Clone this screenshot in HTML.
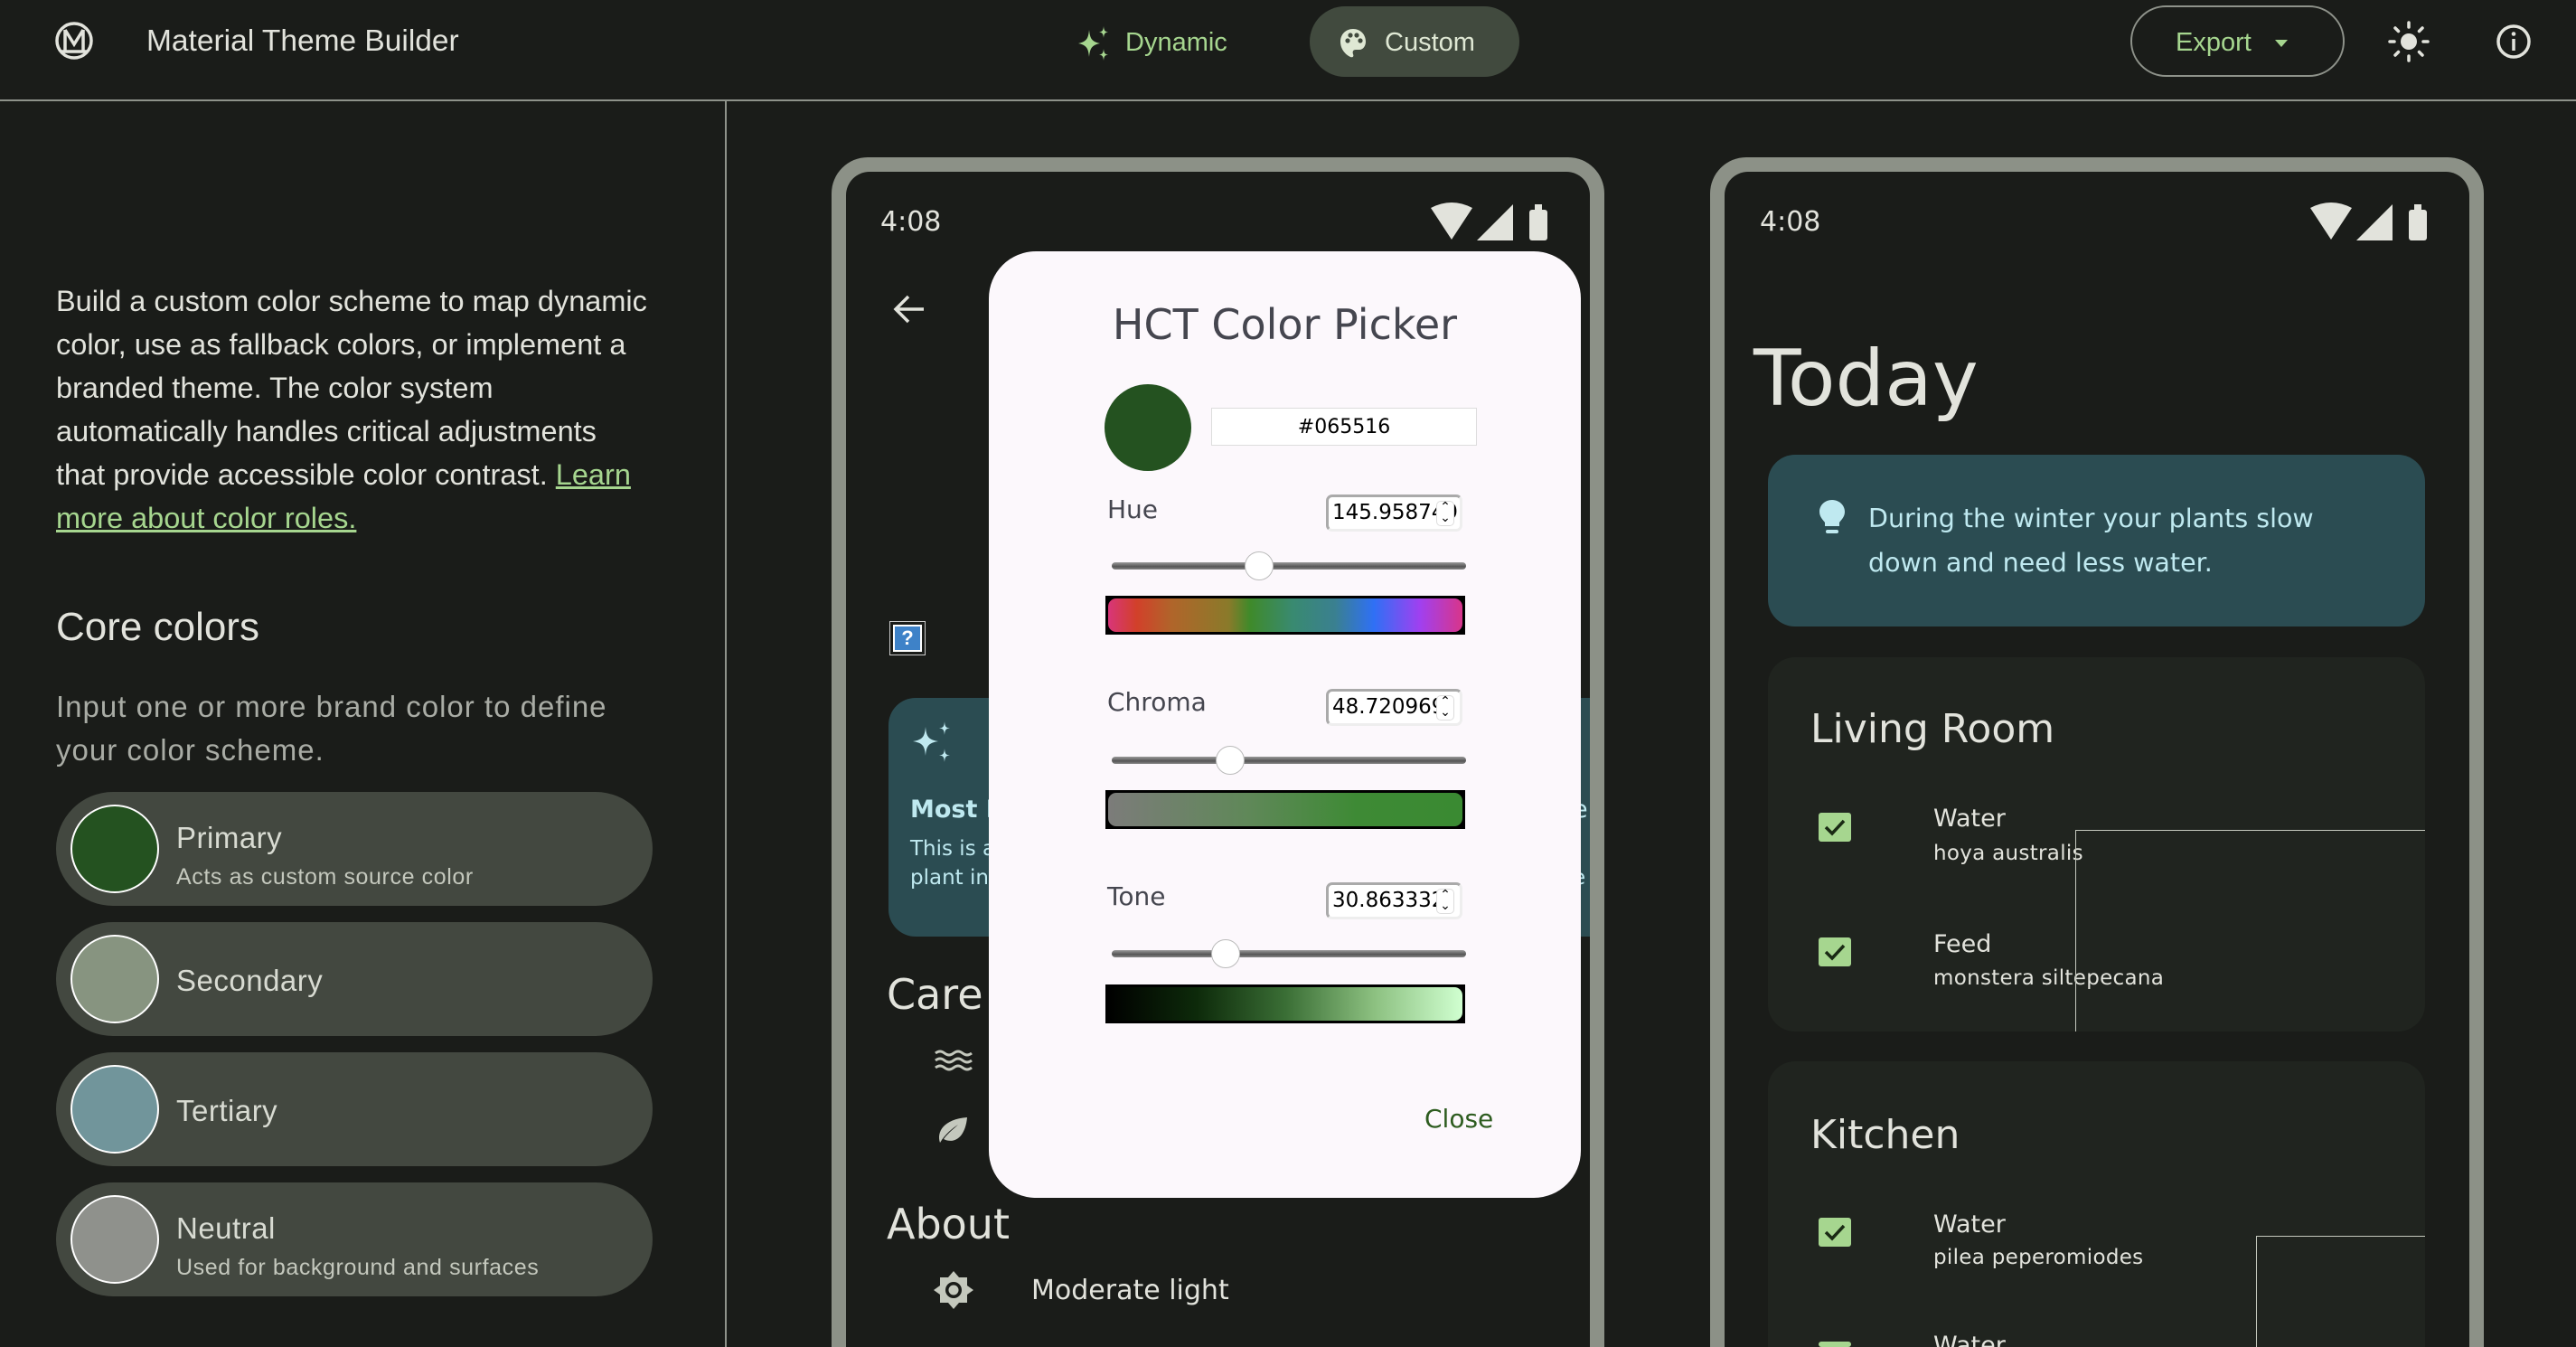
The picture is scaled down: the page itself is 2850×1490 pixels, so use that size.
<!DOCTYPE html>
<html><head><meta charset="utf-8"><style>
*{margin:0;padding:0;box-sizing:border-box}
html,body{width:2850px;height:1490px;overflow:hidden}
body{background:#1a1c19;font-family:"Liberation Sans",sans-serif;color:#e2e3dc;position:relative}
#w{position:absolute;left:0;top:0;width:2850px;height:1490px;overflow:hidden}
.a{position:absolute;white-space:nowrap}
.card{position:absolute;left:62px;width:660px;height:126px;border-radius:63px;background:#434840}
.card .c{position:absolute;left:16px;top:14px;width:98px;height:98px;border-radius:50%;border:2px solid #fff}
.card .t{position:absolute;left:133px;font-size:33px;color:#d8dbd2;letter-spacing:.5px}
.card .s{position:absolute;left:133px;font-size:25px;color:#c4c8bd;letter-spacing:.6px}
.track{position:absolute;left:1230px;width:392px;height:8px;border-radius:4px;background:linear-gradient(#9a9a9a,#555 60%,#888)}
.thumb{position:absolute;width:32px;height:32px;border-radius:50%;background:#fff;border:1px solid #bbb}
.bar{position:absolute;left:1223px;width:398px;height:43px;border:3px solid #000;background:#000}
.bar div{width:100%;height:100%;border-radius:9px}
.inp{position:absolute;left:1467px;width:151px;height:41px;border:3px solid #aaa;border-right-color:#eee;border-bottom-color:#eee;border-radius:7px;background:#fff;font-size:23px;color:#000;line-height:35px;padding-left:4px;overflow:hidden}
.inp span{position:absolute;right:6px;top:4px;width:20px;height:28px;font-size:14px;line-height:12px;text-align:center;background:#fff;border:1px solid #ddd;border-radius:5px}
.lbl{position:absolute;left:1225px;font-size:28px;color:#45464f}
.chk{position:absolute;left:104px;width:36px;height:32px;background:#a6d68f;border-radius:3px}
.chk svg{position:absolute;left:6px;top:5px}
.ph{font-family:"DejaVu Sans","Liberation Sans",sans-serif}
</style></head><body><div id="w">
<!-- header -->
<svg class="a" style="left:60px;top:23px" width="44" height="44" viewBox="0 0 44 44"><circle cx="22" cy="22" r="19" fill="none" stroke="#e2e3dc" stroke-width="3.5"/><path d="M12 10v24M32 10v24M12 10l10 16 10-16M8 34h28" fill="none" stroke="#e2e3dc" stroke-width="3.5"/></svg>
<div class="a" style="left:162px;top:26px;font-size:33.5px;line-height:40px;color:#e2e3dc">Material Theme Builder</div>
<svg class="a" style="left:1193px;top:29px" width="36" height="38" viewBox="0 0 36 38"><path d="M12 4C13 14 15 17 24 19 15 21 13 24 12 34 11 24 9 21 0 19 9 17 11 14 12 4Z" fill="#a6d68f"/><path d="M28 0C28.5 5 29.5 6 33 6.5 29.5 7 28.5 8 28 13 27.5 8 26.5 7 23 6.5 26.5 6 27.5 5 28 0Z" fill="#a6d68f"/><path d="M28 25C28.5 30 29.5 31 33 31.5 29.5 32 28.5 33 28 38 27.5 33 26.5 32 23 31.5 26.5 31 27.5 30 28 25Z" fill="#a6d68f"/></svg>
<div class="a" style="left:1245px;top:29px;font-size:29px;line-height:36px;color:#a6d68f">Dynamic</div>
<div class="a" style="left:1449px;top:7px;width:232px;height:78px;border-radius:39px;background:#414a3e"></div>
<svg class="a" style="left:1482px;top:31px" width="30" height="34" viewBox="0 0 30 34"><path d="M15 1C7 1 1 7 1 15c0 8 5 14 11 17 3 1 4-1 3-3-1-3 0-5 3-5h4c4 0 7-4 7-9C29 7 23 1 15 1Z" fill="#dfe8d4"/><circle cx="9" cy="14" r="2.6" fill="#414a3e"/><circle cx="12" cy="8" r="2.6" fill="#414a3e"/><circle cx="19" cy="8" r="2.6" fill="#414a3e"/><circle cx="23" cy="14" r="2.6" fill="#414a3e"/></svg>
<div class="a" style="left:1532px;top:29px;font-size:29px;line-height:36px;color:#dfe8d4">Custom</div>
<div class="a" style="left:2357px;top:6px;width:237px;height:79px;border-radius:40px;border:2px solid #8e928a"></div>
<div class="a" style="left:2407px;top:29px;font-size:29px;line-height:36px;color:#a6d68f">Export</div>
<div class="a" style="left:2517px;top:44px;width:0;height:0;border-left:7px solid transparent;border-right:7px solid transparent;border-top:8px solid #a6d68f"></div>
<svg class="a" style="left:2641px;top:22px" width="48" height="48" viewBox="0 0 48 48"><circle cx="24" cy="24" r="9" fill="#e2e3dc"/><g stroke="#e2e3dc" stroke-width="3.5" stroke-linecap="round"><path d="M24 3v5M24 40v5M3 24h5M40 24h5M9 9l3.5 3.5M35.5 35.5L39 39M9 39l3.5-3.5M35.5 12.5L39 9"/></g></svg>
<svg class="a" style="left:2761px;top:26px" width="40" height="40" viewBox="0 0 40 40"><circle cx="20" cy="20" r="17" fill="none" stroke="#e2e3dc" stroke-width="3.5"/><path d="M20 17v13" stroke="#e2e3dc" stroke-width="3.5"/><circle cx="20" cy="11.5" r="2.3" fill="#e2e3dc"/></svg>
<div class="a" style="left:0;top:110px;width:2850px;height:2px;background:#8e928a"></div>
<div class="a" style="left:802px;top:111px;width:2px;height:1379px;background:#8e928a"></div>

<!-- sidebar -->
<div class="a" style="left:62px;top:309px;font-size:32.5px;line-height:48px;color:#e2e3dc">Build a custom color scheme to map dynamic<br>color, use as fallback colors, or implement a<br>branded theme. The color system<br>automatically handles critical adjustments<br>that provide accessible color contrast. <span style="color:#a6d68f;text-decoration:underline">Learn</span><br><span style="color:#a6d68f;text-decoration:underline">more about color roles.</span></div>
<div class="a" style="left:62px;top:668px;font-size:44px;line-height:52px;color:#e2e3dc">Core colors</div>
<div class="a" style="left:62px;top:758px;font-size:33px;line-height:48px;color:#a9aca5;letter-spacing:1px">Input one or more brand color to define<br>your color scheme.</div>
<div class="card" style="top:876px"><div class="c" style="background:#245220"></div><div class="t" style="top:32px">Primary</div><div class="s" style="top:80px">Acts as custom source color</div></div>
<div class="card" style="top:1020px"><div class="c" style="background:#879480"></div><div class="t" style="top:46px">Secondary</div></div>
<div class="card" style="top:1164px"><div class="c" style="background:#71959b"></div><div class="t" style="top:46px">Tertiary</div></div>
<div class="card" style="top:1308px"><div class="c" style="background:#8f918c"></div><div class="t" style="top:32px">Neutral</div><div class="s" style="top:80px">Used for background and surfaces</div></div>

<!-- phone 1 -->
<div class="a" style="left:920px;top:174px;width:855px;height:1316px;border-radius:40px 40px 0 0;background:#8c9187"></div>
<div class="a ph" style="left:936px;top:190px;width:823px;height:1300px;border-radius:26px 26px 0 0;background:#1a1c19"></div>
<div class="a ph" style="left:974px;top:228px;font-size:30px;line-height:36px;color:#e2e3dc">4:08</div>
<svg class="a" style="left:1581px;top:224px" width="135" height="44" viewBox="0 0 135 44"><path d="M2 6Q25 -6 48 6L25 41Z" fill="#e2e3dc"/><path d="M53 42L93 2V42Z" fill="#e2e3dc"/><rect x="111" y="8" width="20" height="34" rx="3" fill="#e2e3dc"/><rect x="117" y="2" width="8" height="7" fill="#e2e3dc"/></svg>
<svg class="a" style="left:988px;top:325px" width="36" height="34" viewBox="0 0 36 34"><path d="M34 17H4M17 3L3 17l14 14" fill="none" stroke="#e2e3dc" stroke-width="3.5"/></svg>
<div class="a" style="left:984px;top:687px;width:40px;height:38px;border:1px solid #ccc;padding:3px"><div style="width:100%;height:100%;background:#3e82c8;border:2px solid #fff;color:#fff;font-size:22px;line-height:26px;text-align:center;font-weight:bold">?</div></div>
<div class="a" style="left:983px;top:772px;width:776px;height:264px;border-radius:30px 0 0 30px;background:#2b4c52"></div>
<svg class="a" style="left:1008px;top:798px" width="50" height="46" viewBox="0 0 50 46"><path d="M16 6C17 17 19 20 30 22 19 24 17 27 16 38 15 27 13 24 2 22 13 20 15 17 16 6Z" fill="#bfe9f0"/><path d="M37 0C37.5 6 38.5 7 43 7.5 38.5 8 37.5 9 37 15 36.5 9 35.5 8 31 7.5 35.5 7 36.5 6 37 0Z" fill="#bfe9f0"/><path d="M37 30C37.5 36 38.5 37 43 37.5 38.5 38 37.5 39 37 45 36.5 39 35.5 38 31 37.5 35.5 37 36.5 36 37 30Z" fill="#bfe9f0"/></svg>
<div class="a ph" style="left:1007px;top:880px;font-size:27px;font-weight:bold;color:#bfe9f0">Most Popular</div>
<div class="a ph" style="left:1007px;top:926px;font-size:23px;color:#bfe9f0">This is a</div>
<div class="a ph" style="left:1007px;top:958px;font-size:23px;color:#bfe9f0">plant in</div>
<div class="a ph" style="left:1740px;top:880px;font-size:27px;color:#bfe9f0">e</div>
<div class="a ph" style="left:1740px;top:958px;font-size:23px;color:#bfe9f0">e</div>
<div class="a ph" style="left:981px;top:1072px;font-size:46px;line-height:56px;color:#e2e3dc">Care</div>
<svg class="a" style="left:1034px;top:1160px" width="42" height="26" viewBox="0 0 42 26"><g fill="none" stroke="#c4c8bd" stroke-width="3"><path d="M1 5q5-4 10 0t10 0 10 0 10 0M1 13q5-4 10 0t10 0 10 0 10 0M1 21q5-4 10 0t10 0 10 0 10 0"/></g></svg>
<svg class="a" style="left:1036px;top:1234px" width="36" height="32" viewBox="0 0 36 32"><path d="M4 30C0 18 8 4 34 2 32 24 20 32 8 26 14 18 20 14 24 10 18 14 10 20 4 30Z" fill="#c4c8bd"/></svg>
<div class="a ph" style="left:981px;top:1326px;font-size:46px;line-height:56px;color:#e2e3dc">About</div>
<svg class="a" style="left:1032px;top:1404px" width="46" height="46" viewBox="0 0 46 46"><path d="M23 2l6 7h9v9l7 5-7 5v9h-9l-6 7-6-7H8v-9l-7-5 7-5V9h9Z" fill="#c4c8bd"/><circle cx="23" cy="23" r="9" fill="#1a1c19"/><circle cx="23" cy="23" r="5.5" fill="#c4c8bd"/></svg>
<div class="a ph" style="left:1141px;top:1408px;font-size:30px;line-height:40px;color:#e2e3dc">Moderate light</div>

<!-- dialog -->
<div class="a" style="left:1094px;top:278px;width:655px;height:1047px;border-radius:52px;background:#fcf8fc"></div>
<div class="a ph" style="left:1094px;top:331px;width:655px;text-align:center;font-size:46px;line-height:56px;color:#45464f">HCT Color Picker</div>
<div class="a" style="left:1222px;top:425px;width:96px;height:96px;border-radius:50%;background:#245220"></div>
<div class="a ph" style="left:1340px;top:451px;width:294px;height:42px;border:1px solid #ddd;background:#fff;text-align:center;font-size:22px;line-height:42px;color:#000">#065516</div>
<div class="lbl ph" style="top:547px">Hue</div>
<div class="inp ph" style="top:547px">145.958749<span>⌃<br>⌄</span></div>
<div class="track" style="top:622px"></div><div class="thumb" style="left:1377px;top:610px"></div>
<div class="bar" style="top:659px"><div style="background:linear-gradient(90deg,#d8357a,#d2402a 8%,#b0652a 18%,#8a7a2a 34%,#3f8a2a 40%,#398a70 52%,#3a8090 64%,#2f70f5 75%,#a040f0 88%,#d8358a)"></div></div>
<div class="lbl ph" style="top:760px">Chroma</div>
<div class="inp ph" style="top:762px">48.720969<span>⌃<br>⌄</span></div>
<div class="track" style="top:837px"></div><div class="thumb" style="left:1345px;top:825px"></div>
<div class="bar" style="top:874px"><div style="background:linear-gradient(90deg,#7c7c7a,#5f8858 40%,#3e8a35 70%,#3a8a32)"></div></div>
<div class="lbl ph" style="top:975px">Tone</div>
<div class="inp ph" style="top:976px">30.863332<span>⌃<br>⌄</span></div>
<div class="track" style="top:1051px"></div><div class="thumb" style="left:1340px;top:1039px"></div>
<div class="bar" style="top:1089px"><div style="background:linear-gradient(90deg,#000,#0d2a0a 25%,#3a6e35 50%,#8cc080 75%,#d0ffd0)"></div></div>
<div class="a ph" style="left:1576px;top:1221px;font-size:28px;line-height:34px;color:#2d5c1f">Close</div>

<!-- phone 2 -->
<div class="a" style="left:1892px;top:174px;width:856px;height:1316px;border-radius:40px 40px 0 0;background:#8c9187"></div>
<div class="a" style="left:1908px;top:190px;width:824px;height:1300px;border-radius:26px 26px 0 0;background:#1a1c19"></div>
<div class="a ph" style="left:1947px;top:228px;font-size:30px;line-height:36px;color:#e2e3dc">4:08</div>
<svg class="a" style="left:2554px;top:224px" width="135" height="44" viewBox="0 0 135 44"><path d="M2 6Q25 -6 48 6L25 41Z" fill="#e2e3dc"/><path d="M53 42L93 2V42Z" fill="#e2e3dc"/><rect x="111" y="8" width="20" height="34" rx="3" fill="#e2e3dc"/><rect x="117" y="2" width="8" height="7" fill="#e2e3dc"/></svg>
<div class="a ph" style="left:1940px;top:364px;font-size:86px;line-height:110px;color:#e2e3dc">Today</div>
<div class="a" style="left:1956px;top:503px;width:727px;height:190px;border-radius:30px;background:#2b4c52"></div>
<svg class="a" style="left:2012px;top:552px" width="30" height="42" viewBox="0 0 30 42"><path d="M15 1C7 1 1 7 1 14c0 6 4 9 6 12v4h16v-4c2-3 6-6 6-12C29 7 23 1 15 1Z" fill="#bfe9f0"/><rect x="8" y="34" width="14" height="4" rx="2" fill="#bfe9f0"/></svg>
<div class="a ph" style="left:2067px;top:549px;font-size:28.5px;line-height:49px;color:#bfe9f0">During the winter your plants slow<br>down and need less water.</div>
<div class="a" style="left:1956px;top:727px;width:727px;height:414px;border-radius:30px;background:#20241f;overflow:hidden">
<div class="a ph" style="left:47px;top:51px;font-size:44px;line-height:58px;color:#e2e3dc">Living Room</div>
<div class="chk" style="left:56px;top:172px"><svg width="24" height="22" viewBox="0 0 24 22"><path d="M2 11l7 7L22 4" fill="none" stroke="#1a2a14" stroke-width="3.5"/></svg></div>
<div class="a ph" style="left:183px;top:163px;font-size:27px;color:#e2e3dc">Water</div>
<div class="a ph" style="left:183px;top:204px;font-size:23px;color:#e2e3dc;letter-spacing:.3px">hoya australis</div>
<div class="chk" style="left:56px;top:310px"><svg width="24" height="22" viewBox="0 0 24 22"><path d="M2 11l7 7L22 4" fill="none" stroke="#1a2a14" stroke-width="3.5"/></svg></div>
<div class="a ph" style="left:183px;top:302px;font-size:27px;color:#e2e3dc">Feed</div>
<div class="a ph" style="left:183px;top:342px;font-size:23px;color:#e2e3dc;letter-spacing:.3px">monstera siltepecana</div>
<div class="a" style="left:340px;top:191px;width:387px;height:223px;border-left:1px solid #c4c8bd;border-top:1px solid #c4c8bd"></div>
</div>
<div class="a" style="left:1956px;top:1174px;width:727px;height:316px;border-radius:30px 30px 0 0;background:#20241f;overflow:hidden">
<div class="a ph" style="left:47px;top:53px;font-size:44px;line-height:58px;color:#e2e3dc">Kitchen</div>
<div class="chk" style="left:56px;top:173px"><svg width="24" height="22" viewBox="0 0 24 22"><path d="M2 11l7 7L22 4" fill="none" stroke="#1a2a14" stroke-width="3.5"/></svg></div>
<div class="a ph" style="left:183px;top:165px;font-size:27px;color:#e2e3dc">Water</div>
<div class="a ph" style="left:183px;top:204px;font-size:23px;color:#e2e3dc;letter-spacing:.3px">pilea peperomiodes</div>
<div class="chk" style="left:56px;top:310px;height:6px"></div>
<div class="a ph" style="left:183px;top:300px;height:16px;overflow:hidden;font-size:27px;line-height:30px;color:#e2e3dc">Water</div>
<div class="a" style="left:540px;top:193px;width:187px;height:123px;border-left:1px solid #c4c8bd;border-top:1px solid #c4c8bd"></div>
</div>
</div></body></html>
